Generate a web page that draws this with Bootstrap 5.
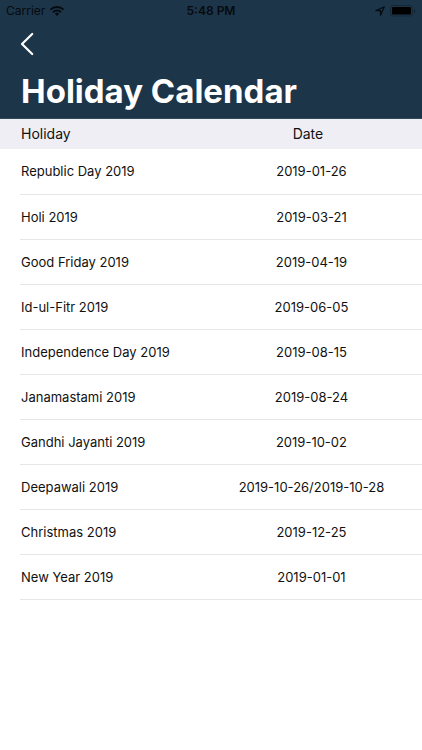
<!DOCTYPE html>
<html lang="en">
<head>
<meta charset="utf-8">
<meta name="viewport" content="width=device-width, initial-scale=1">
<title>Holiday Calendar</title>
<link rel="stylesheet" href="https://cdn.jsdelivr.net/npm/bootstrap@5.3.0/dist/css/bootstrap.min.css">
<style>
body { font-family: Inter, "Liberation Sans", sans-serif; color: #111; }
.app-header { background: #1d3549; border-bottom: 1px solid #33495c; }
.status-bar { height: 22px; padding: 0 6px; font-size: 12px; line-height: 22px; color: #050a0f; }
.status-side { flex: 1 1 0; }
.status-time { font-weight: 600; }
.back-btn { margin: 4px 0 0 12px; padding: 6px 8px; line-height: 0; }
.page-title { padding: 8px 21px 6px; font-size: 33px; font-weight: 700; line-height: 42px; }
.holiday-list { padding-left: 20px; }
.holiday-table { font-size: 13px; line-height: 20px; }
.holiday-table th { height: 30px; font-size: 14px; font-weight: 400; background: #efeef5; }
.holiday-table th:first-child { box-shadow: -20px 0 0 #efeef5; }
.holiday-table td { height: 45px; border-bottom: 1px solid #e6e6e8; }
.holiday-table th, .holiday-table td { padding: 0 1px; vertical-align: middle; }
.date-col { width: 55%; text-align: center; }
.holiday-table th.date-col { padding-right: 8px; }
</style>
</head>
<body class="bg-white">
<header class="app-header text-white">
  <div class="status-bar d-flex align-items-center">
    <div class="status-side d-flex align-items-center gap-1">
      <span>Carrier</span>
      <svg width="16" height="12" viewBox="0 0 16 12" fill="none" stroke="currentColor" stroke-width="2" aria-hidden="true"><path d="M1.500 4.600a9.300 9.300 0 0 1 13 0M4 7.200a5.700 5.700 0 0 1 8 0"/><path d="M8 11 5.800 8.800a3.200 3.200 0 0 1 4.400 0z" fill="currentColor" stroke="none"/></svg>
    </div>
    <span class="status-time">5:48 PM</span>
    <div class="status-side d-flex align-items-center justify-content-end gap-1">
      <svg width="12" height="12" viewBox="0 0 12 12" fill="none" stroke="currentColor" stroke-width="1.2" stroke-linejoin="round" aria-hidden="true"><path d="M10.300 1.700 6.500 10.200V5.700H1.800z"/></svg>
      <svg width="26" height="12" viewBox="0 0 26 12" aria-hidden="true"><rect x=".5" y=".5" width="22" height="10.500" rx="2.500" fill="none" stroke="#142737"/><rect x="2" y="2" width="19" height="7.500" rx="1" fill="#000"/><path d="M24 4v4q1.500-.5 1.500-2T24 4z" fill="#142737"/></svg>
    </div>
  </div>
  <button type="button" class="back-btn btn border-0 text-white" aria-label="Back">
    <svg width="14" height="24" viewBox="0 0 14 24" fill="none" stroke="currentColor" stroke-width="2.2" stroke-linecap="round" stroke-linejoin="round" aria-hidden="true"><path d="M12.200 2 2 12l10.200 10"/></svg>
  </button>
  <h1 class="page-title mb-0">Holiday Calendar</h1>
</header>
<main class="holiday-list">
  <table class="holiday-table w-100">
    <thead><tr><th scope="col">Holiday</th><th scope="col" class="date-col">Date</th></tr></thead>
    <tbody>
      <tr><td>Republic Day 2019</td><td class="date-col">2019-01-26</td></tr>
      <tr><td>Holi 2019</td><td class="date-col">2019-03-21</td></tr>
      <tr><td>Good Friday 2019</td><td class="date-col">2019-04-19</td></tr>
      <tr><td>Id-ul-Fitr 2019</td><td class="date-col">2019-06-05</td></tr>
      <tr><td>Independence Day 2019</td><td class="date-col">2019-08-15</td></tr>
      <tr><td>Janamastami 2019</td><td class="date-col">2019-08-24</td></tr>
      <tr><td>Gandhi Jayanti 2019</td><td class="date-col">2019-10-02</td></tr>
      <tr><td>Deepawali 2019</td><td class="date-col">2019-10-26/2019-10-28</td></tr>
      <tr><td>Christmas 2019</td><td class="date-col">2019-12-25</td></tr>
      <tr><td>New Year 2019</td><td class="date-col">2019-01-01</td></tr>
    </tbody>
  </table>
</main>
<script src="https://cdn.jsdelivr.net/npm/bootstrap@5.3.0/dist/js/bootstrap.bundle.min.js"></script>
</body>
</html>
